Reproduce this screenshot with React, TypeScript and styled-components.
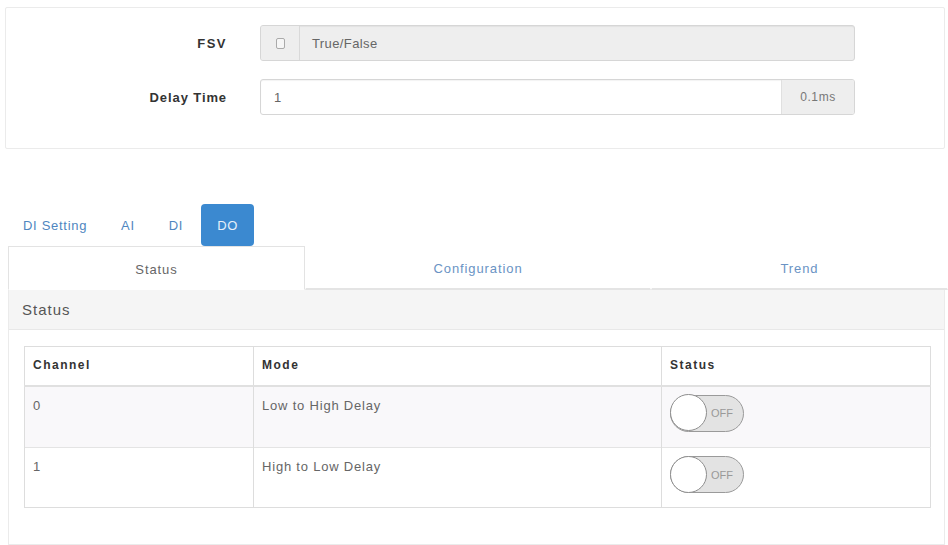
import React from "react";
import styled, { createGlobalStyle } from "styled-components";

const Global = createGlobalStyle`
  html, body { margin: 0; padding: 0; background: #fff; }
  body { font-family: "Liberation Sans", Arial, sans-serif; font-size: 13px; color: #555; }
  * { box-sizing: border-box; }
`;

const Page = styled.div`
  width: 948px;
  height: 545px;
  overflow: hidden;
  padding-top: 7px;
`;

const FormPanel = styled.div`
  margin: 0 3px 0 5px;
  height: 142px;
  border: 1px solid #ebebeb;
  border-radius: 2px;
  padding: 17px 0 0 0;
  display: flex;
  flex-direction: column;
  gap: 18px;
`;

const FormRow = styled.div`
  display: grid;
  grid-template-columns: 221px 595px;
  column-gap: 33px;
  align-items: center;
`;

const Label = styled.div<{ $spaced?: boolean }>`
  text-align: right;
  font-weight: bold;
  font-size: 13px;
  color: #333;
  letter-spacing: ${(p) => (p.$spaced ? "1.5px" : "0.9px")};
`;

const InputGroup = styled.div<{ $disabled?: boolean }>`
  display: flex;
  height: 36px;
  border: 1px solid #d6d6d6;
  border-radius: 3px;
  background: ${(p) => (p.$disabled ? "#eeeeee" : "#fff")};
  overflow: hidden;
  box-shadow: inset 0 1px 1px rgba(0, 0, 0, 0.05);
`;

const Addon = styled.div<{ $side: "left" | "right" }>`
  width: ${(p) => (p.$side === "left" ? "39px" : "73px")};
  display: flex;
  align-items: center;
  justify-content: center;
  background: #eeeeee;
  color: #777;
  font-size: 12px;
  letter-spacing: 0.6px;
  ${(p) => (p.$side === "left" ? "border-right: 1px solid #d9d9d9;" : "border-left: 1px solid #e0e0e0;")}
`;

const CheckBox = styled.span`
  width: 9px;
  height: 11px;
  border: 1px solid #aaa;
  border-radius: 2px;
  background: #f6f6f6;
`;

const Field = styled.div<{ $pad: number }>`
  flex: 1;
  display: flex;
  align-items: center;
  padding-left: ${(p) => p.$pad}px;
  color: #666;
  font-size: 13px;
  letter-spacing: 0.4px;
`;

const Pills = styled.div`
  display: flex;
  gap: 2px;
  margin: 55px 0 0 7px;
  height: 42px;
`;

const Pill = styled.div<{ $active?: boolean }>`
  padding: 0 16px;
  display: flex;
  align-items: center;
  font-size: 13px;
  letter-spacing: 0.7px;
  border-radius: 4px;
  color: ${(p) => (p.$active ? "#e6f0fa" : "#4f86c0")};
  background: ${(p) => (p.$active ? "#3b89d0" : "transparent")};
`;

const Tabs = styled.div`
  display: grid;
  grid-template-columns: 297px 346px 1fr;
  margin-left: 8px;
  height: 44px;
`;

const Tab = styled.div<{ $active?: boolean }>`
  display: flex;
  align-items: center;
  justify-content: center;
  font-size: 13px;
  letter-spacing: 0.9px;
  color: ${(p) => (p.$active ? "#666" : "#6a93c4")};
  border: 1px solid ${(p) => (p.$active ? "#e3e3e3" : "transparent")};
  border-bottom: ${(p) => (p.$active ? "1px solid transparent" : "2px solid #e4e4e4")};
  padding-top: 2px;
`;

const Panel = styled.div`
  margin: 0 3px 0 8px;
  border: 1px solid #ebebeb;
  border-top: none;
`;

const PanelHeading = styled.div`
  height: 40px;
  background: #f5f5f5;
  border-bottom: 1px solid #e8e8e8;
  display: flex;
  align-items: center;
  padding-left: 13px;
  font-size: 15px;
  letter-spacing: 1px;
  color: #555;
`;

const PanelBody = styled.div`
  padding: 16px 13px 36px 15px;
`;

const Table = styled.table`
  width: 100%;
  border-collapse: collapse;
  border: 1px solid #dddddd;
  font-size: 13px;
`;

const Th = styled.th<{ $w?: number }>`
  text-align: left;
  font-weight: bold;
  font-size: 12px;
  color: #333;
  height: 39px;
  padding: 0 8px 2px 8px;
  letter-spacing: 1.5px;
  border: 1px solid #dddddd;
  border-bottom: 2px solid #e0e0e0;
  width: ${(p) => (p.$w ? `${p.$w}px` : "auto")};
`;

const Tr = styled.tr<{ $striped?: boolean }>`
  background: ${(p) => (p.$striped ? "#f9f8fa" : "#fff")};
`;

const Td = styled.td<{ $h: number }>`
  vertical-align: top;
  height: ${(p) => p.$h}px;
  padding: 11px 8px 0 8px;
  color: #666;
  letter-spacing: 0.8px;
  border-left: 1px solid #dddddd;
  border-top: 1px solid #e4e4e4;
`;

const ToggleCell = styled(Td)`
  padding-top: 8px;
`;

const Toggle = styled.div`
  position: relative;
  width: 74px;
  height: 37px;
  border: 1.5px solid #9a9a9a;
  border-radius: 19px;
  background: #e3e3e3;
  display: flex;
  align-items: center;
  justify-content: flex-end;
  padding-right: 10px;
  font-size: 11px;
  letter-spacing: 0;
  color: #999;
`;

const Knob = styled.span`
  position: absolute;
  left: -1.5px;
  top: -1.5px;
  width: 37px;
  height: 37px;
  border-radius: 50%;
  background: #fff;
  border: 1.5px solid #8e8e8e;
`;

const rows = [
  { ch: "0", mode: "Low to High Delay", h: 62 },
  { ch: "1", mode: "High to Low Delay", h: 60 },
];

export default function App() {
  return (
    <Page>
      <Global />
      <FormPanel>
        <FormRow>
          <Label $spaced>FSV</Label>
          <InputGroup $disabled>
            <Addon $side="left">
              <CheckBox />
            </Addon>
            <Field $pad={12}>True/False</Field>
          </InputGroup>
        </FormRow>
        <FormRow>
          <Label>Delay Time</Label>
          <InputGroup>
            <Field $pad={13}>1</Field>
            <Addon $side="right">0.1ms</Addon>
          </InputGroup>
        </FormRow>
      </FormPanel>

      <Pills>
        <Pill>DI Setting</Pill>
        <Pill>AI</Pill>
        <Pill>DI</Pill>
        <Pill $active>DO</Pill>
      </Pills>

      <Tabs>
        <Tab $active>Status</Tab>
        <Tab>Configuration</Tab>
        <Tab>Trend</Tab>
      </Tabs>

      <Panel>
        <PanelHeading>Status</PanelHeading>
        <PanelBody>
          <Table>
            <thead>
              <tr>
                <Th $w={229}>Channel</Th>
                <Th $w={408}>Mode</Th>
                <Th>Status</Th>
              </tr>
            </thead>
            <tbody>
              {rows.map((r, i) => (
                <Tr key={r.ch} $striped={i === 0}>
                  <Td $h={r.h}>{r.ch}</Td>
                  <Td $h={r.h}>{r.mode}</Td>
                  <ToggleCell $h={r.h}>
                    <Toggle>
                      <Knob />
                      OFF
                    </Toggle>
                  </ToggleCell>
                </Tr>
              ))}
            </tbody>
          </Table>
        </PanelBody>
      </Panel>
    </Page>
  );
}
